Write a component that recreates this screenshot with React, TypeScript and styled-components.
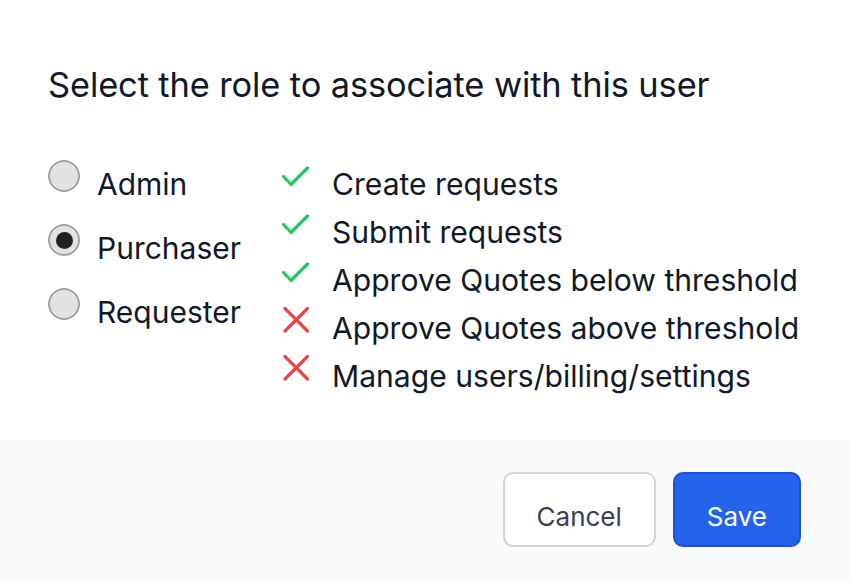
import styled, {createGlobalStyle} from 'styled-components';
import {useState} from 'react';

const GlobalStyle = createGlobalStyle`
  html, body {
    margin: 0;
    padding: 0;
    background: #ffffff;
  }

  body {
    font-family: Inter, "Noto Sans", sans-serif;
    color: #111827;
    -webkit-font-smoothing: antialiased;
  }
`;

const Dialog = styled.div`
  width: 850px;
  height: 580px;
  display: flex;
  flex-direction: column;
  background: #ffffff;
`;

const Body = styled.div`
  flex: 1;
  padding: 61px 48px 0 48px;
`;

const Title = styled.h2`
  margin: 0 0 51px 0;
  font-size: 34.4px;
  font-weight: 400;
  line-height: 48px;
  letter-spacing: -0.1px;
  color: #111827;
`;

const Columns = styled.div`
  display: flex;
  align-items: flex-start;
`;

const RoleList = styled.div`
  width: 234px;
  display: flex;
  flex-direction: column;
`;

const RoleRow = styled.label`
  display: flex;
  align-items: flex-start;
  height: 64px;
  font-size: 30px;
  line-height: 48px;
  cursor: pointer;
`;

const RadioCircle = styled.span<{ $checked: boolean }>`
  box-sizing: border-box;
  flex-shrink: 0;
  width: 32px;
  height: 32px;
  margin-right: 17px;
  border-radius: 50%;
  border: 2px solid #a3a3a3;
  background: #e2e2e2;
  display: flex;
  align-items: center;
  justify-content: center;

  &::after {
    content: '';
    width: 17px;
    height: 17px;
    border-radius: 50%;
    background: #222222;
    display: ${props => props.$checked ? 'block' : 'none'};
  }
`;

const PermissionList = styled.ul`
  list-style: none;
  margin: 0;
  padding: 0;
  display: flex;
  flex-direction: column;
`;

const PermissionRow = styled.li`
  display: flex;
  align-items: flex-start;
  height: 48px;
  font-size: 30.1px;
  line-height: 48px;
`;

const IconSlot = styled.span`
  width: 50px;
  height: 48px;
  flex-shrink: 0;
  display: flex;

  svg {
    display: block;
  }
`;

const Footer = styled.div`
  height: 140px;
  box-sizing: border-box;
  background: #f9fafb;
  padding: 32px 49px 0 0;
  display: flex;
  justify-content: flex-end;
  align-items: flex-start;
  gap: 17px;
`;

const Button = styled.button<{ $primary?: boolean }>`
  box-sizing: border-box;
  height: 75px;
  padding: 14px 32px 0 32px;
  border-radius: 10px;
  font-family: Inter, "Noto Sans", sans-serif;
  font-size: 26px;
  border: 2px solid ${props => props.$primary ? '#1d4ed8' : '#d1d5db'};
  background: ${props => props.$primary ? '#2563eb' : '#ffffff'};
  color: ${props => props.$primary ? '#ffffff' : '#374151'};
  cursor: pointer;
`;

function CheckIcon() {
  return (
    <svg width="50" height="48" viewBox="0 0 50 48">
      <path d="M1.5 16.5 L9 24.5 L25.5 8" fill="none" stroke="#22c55e" strokeWidth="3.2" strokeLinecap="round"
            strokeLinejoin="round"/>
    </svg>
  );
}

function CrossIcon() {
  return (
    <svg width="50" height="48" viewBox="0 0 50 48">
      <path d="M3 4.5 L25.5 27 M25.5 4.5 L3 27" fill="none" stroke="#ef4444" strokeWidth="3.2"
            strokeLinecap="round"/>
    </svg>
  );
}

const roles = ['Admin', 'Purchaser', 'Requester'];

const permissions = [
  {label: 'Create requests', allowed: true},
  {label: 'Submit requests', allowed: true},
  {label: 'Approve Quotes below threshold', allowed: true},
  {label: 'Approve Quotes above threshold', allowed: false},
  {label: 'Manage users/billing/settings', allowed: false},
];

export default function App() {
  const [selectedRole, setSelectedRole] = useState<string>('Purchaser');

  return (<>
      <GlobalStyle/>
      <Dialog>
        <Body>
          <Title>Select the role to associate with this user</Title>
          <Columns>
            <RoleList>
              {roles.map(role => (
                <RoleRow key={role} onClick={() => setSelectedRole(role)}>
                  <RadioCircle $checked={selectedRole === role}/>
                  {role}
                </RoleRow>
              ))}
            </RoleList>
            <PermissionList>
              {permissions.map((perm, idx) => (
                <PermissionRow key={`permission-${idx}`}>
                  <IconSlot>{perm.allowed ? <CheckIcon/> : <CrossIcon/>}</IconSlot>
                  {perm.label}
                </PermissionRow>
              ))}
            </PermissionList>
          </Columns>
        </Body>
        <Footer>
          <Button>Cancel</Button>
          <Button $primary>Save</Button>
        </Footer>
      </Dialog>
    </>
  );
}
